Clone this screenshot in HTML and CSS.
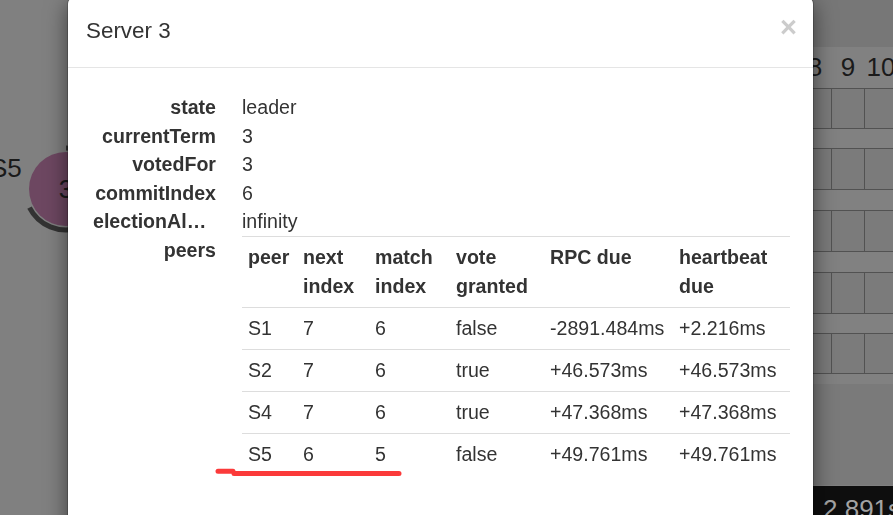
FILE: index.html
```html
<!DOCTYPE html>
<html lang="en">
<head>
<meta charset="utf-8">
<title>Server 3</title>
<link rel="stylesheet" href="styles.css">
</head>
<body>
<svg class="canvas" width="893" height="515" viewBox="0 0 893 515" xmlns="http://www.w3.org/2000/svg">
  <rect x="0" y="0" width="893" height="515" fill="#808080"/>
  <!-- log area -->
  <rect x="790" y="0" width="103" height="47" fill="#777777"/>
  <rect x="790" y="47" width="103" height="337" fill="#818181"/>
  <rect x="790" y="384" width="103" height="101" fill="#7a7a7a"/>
  <g class="log-index">
    <text x="815" y="76" text-anchor="middle">8</text>
    <text x="848" y="76" text-anchor="middle">9</text>
    <text x="881" y="76" text-anchor="middle">10</text>
  </g>
  <g class="log-row" fill="#7b7b7b" stroke="#525252" stroke-width="1">
    <rect x="798.5" y="88.5" width="33" height="40"/><rect x="831.5" y="88.5" width="33" height="40"/><rect x="864.5" y="88.5" width="33" height="40"/>
    <rect x="798.5" y="148.5" width="33" height="41"/><rect x="831.5" y="148.5" width="33" height="41"/><rect x="864.5" y="148.5" width="33" height="41"/>
    <rect x="798.5" y="210.5" width="33" height="41"/><rect x="831.5" y="210.5" width="33" height="41"/><rect x="864.5" y="210.5" width="33" height="41"/>
    <rect x="798.5" y="272.5" width="33" height="41"/><rect x="831.5" y="272.5" width="33" height="41"/><rect x="864.5" y="272.5" width="33" height="41"/>
    <rect x="798.5" y="333.5" width="33" height="40"/><rect x="831.5" y="333.5" width="33" height="40"/><rect x="864.5" y="333.5" width="33" height="40"/>
  </g>
  <rect x="790" y="486" width="103" height="29" fill="#0e0e0e"/>
  <text class="clock" x="823" y="518">2.891s</text>
  <!-- server S5 -->
  <text class="server-name" x="-10" y="177">S5</text>
  <circle cx="66" cy="189" r="37" fill="#6d4761"/>
  <text class="server-term" x="66" y="198" text-anchor="middle">3</text>
  <path d="M66 148 A41 41 0 1 1 29.5 207.6" fill="none" stroke="#333333" stroke-width="5"/>
</svg>

<div class="modal">
  <div class="modal-header">
    <h4 class="modal-title">Server 3</h4>
    <button class="close" type="button">&times;</button>
  </div>
  <div class="modal-body">
    <dl class="props">
      <dt>state</dt><dd>leader</dd>
      <dt>currentTerm</dt><dd>3</dd>
      <dt>votedFor</dt><dd>3</dd>
      <dt>commitIndex</dt><dd>6</dd>
      <dt>electionAlarm</dt><dd>infinity</dd>
      <dt>peers</dt>
      <dd>
        <table class="peers">
          <colgroup>
            <col class="c-peer"><col class="c-next"><col class="c-match"><col class="c-vote"><col class="c-rpc"><col class="c-hb">
          </colgroup>
          <tr><th>peer</th><th>next index</th><th>match index</th><th>vote granted</th><th>RPC due</th><th>heartbeat due</th></tr>
          <tr><td>S1</td><td>7</td><td>6</td><td>false</td><td>-2891.484ms</td><td>+2.216ms</td></tr>
          <tr><td>S2</td><td>7</td><td>6</td><td>true</td><td>+46.573ms</td><td>+46.573ms</td></tr>
          <tr><td>S4</td><td>7</td><td>6</td><td>true</td><td>+47.368ms</td><td>+47.368ms</td></tr>
          <tr><td>S5</td><td>6</td><td>5</td><td>false</td><td>+49.761ms</td><td>+49.761ms</td></tr>
        </table>
      </dd>
    </dl>
  </div>
</div>

<svg class="annotation" width="893" height="515" viewBox="0 0 893 515" xmlns="http://www.w3.org/2000/svg">
  <path d="M218 471.3 L233 471.3 M234 473.6 L399 473.6" fill="none" stroke="#fb3a3a" stroke-width="5" stroke-linecap="round"/>
</svg>
</body>
</html>
```

FILE: styles.css
```css
html, body {
  margin: 0;
  padding: 0;
}

body {
  width: 893px;
  height: 515px;
  overflow: hidden;
  background: #808080;
  font-family: "Liberation Sans", Arial, sans-serif;
  color: #333333;
}

.canvas {
  display: block;
}

.canvas text {
  font-family: "Liberation Sans", Arial, sans-serif;
  font-size: 26px;
  fill: #1a1a1a;
}

.canvas .clock {
  fill: #a3a3a3;
}

.modal {
  position: fixed;
  left: 67px;
  top: -4px;
  box-sizing: border-box;
  width: 747px;
  height: 580px;
  background: #ffffff;
  background-clip: padding-box;
  border: 1px solid rgba(0, 0, 0, 0.2);
  border-radius: 8px;
  box-shadow: 0 7px 21px rgba(0, 0, 0, 0.5);
}

.modal-header {
  display: flex;
  justify-content: space-between;
  align-items: flex-start;
  padding: 21px 16px 23px 18px;
  border-bottom: 1px solid #e5e5e5;
}

.modal-title {
  margin: 0;
  font-size: 22.4px;
  font-weight: 400;
  line-height: 26px;
  color: #333333;
}

.close {
  margin: -5px 0 0 0;
  padding: 0;
  border: 0;
  background: none;
  font-family: "Liberation Sans", Arial, sans-serif;
  font-size: 29px;
  font-weight: bold;
  line-height: 1;
  color: #cccccc;
}

.modal-body {
  padding: 25px 23px 20px 25px;
}

.props {
  display: grid;
  grid-template-columns: 123px 1fr;
  column-gap: 26px;
  margin: 0;
  font-size: 19.6px;
  line-height: 28.5px;
}

.props dt {
  font-weight: bold;
  text-align: right;
  white-space: nowrap;
  overflow: hidden;
  text-overflow: ellipsis;
}

.props dd {
  margin: 0;
}

.peers {
  width: 100%;
  border-collapse: collapse;
  table-layout: fixed;
  font-size: 19.6px;
}

.peers th,
.peers td {
  padding: 6.25px 6px;
  border-top: 1px solid #dddddd;
  text-align: left;
  vertical-align: top;
  line-height: 28.5px;
}

.peers th {
  padding-top: 6.5px;
  padding-bottom: 6.5px;
  font-weight: bold;
}

.c-peer { width: 55px; }
.c-next { width: 72px; }
.c-match { width: 81px; }
.c-vote { width: 94px; }
.c-rpc { width: 129px; }
.c-hb { width: 117px; }

.annotation {
  position: fixed;
  left: 0;
  top: 0;
  pointer-events: none;
}
```
